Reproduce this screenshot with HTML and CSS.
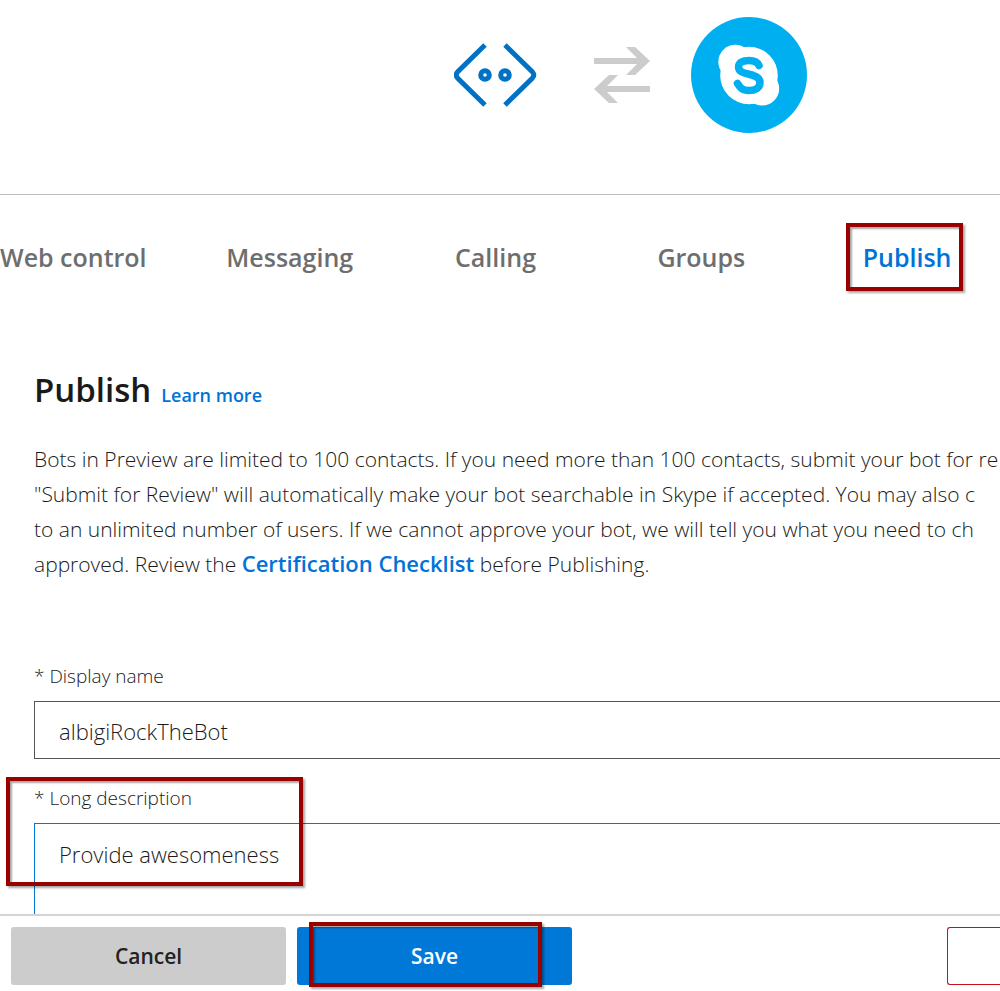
FILE: index.html
```html
<!DOCTYPE html>
<html lang="en">
<head>
<meta charset="utf-8">
<title>Publish</title>
<link rel="stylesheet" href="styles.css">
</head>
<body class="page">
<main class="content">
  <header class="banner">
    <svg class="bot-icon" viewBox="0 0 84 66" aria-hidden="true">
      <g fill="none" stroke="#0072c6" stroke-width="5">
        <path d="M31 3 3.500 30Q1 33 3.500 36L31 63"/>
        <path d="M51 3 78.500 30Q81 33 78.500 36L51 63"/>
        <circle cx="31" cy="33" r="4.300"/>
        <circle cx="51" cy="33" r="4.300"/>
      </g>
    </svg>
    <svg class="swap-icon" viewBox="0 0 56 56" aria-hidden="true">
      <g fill="#ccc">
        <path d="M0 11H43L32 0H41L56 14 41 28H32L43 17H0Z"/>
        <path d="M56 39H13L24 28H15L0 42 15 56H24L13 45H56Z"/>
      </g>
    </svg>
    <svg class="skype-icon" viewBox="0 0 116 116" aria-hidden="true">
      <circle cx="58" cy="58" r="58" fill="#00aff0"/>
      <g fill="#fff">
        <circle cx="58" cy="58.500" r="28.800"/>
        <circle cx="44.300" cy="44.800" r="17"/>
        <circle cx="71.200" cy="71.600" r="17"/>
      </g>
      <path d="M68 48.500C66.500 45 63 43.500 58 43.500 52 43.500 47.500 45.500 47.500 50 47.500 54.500 52 56 58 57.200 64 58.500 69 60.500 69 65.500 69 71 64 73.500 58 73.500 51 73.500 49 70.500 46.500 66.500" fill="none" stroke="#00aff0" stroke-width="7.500" stroke-linecap="round"/>
    </svg>
  </header>
  <nav class="tabs">
    <a class="tab tab-first" href="#web">Web control</a>
    <a class="tab" href="#messaging">Messaging</a>
    <a class="tab" href="#calling">Calling</a>
    <a class="tab" href="#groups">Groups</a>
    <a class="tab tab-active" href="#publish">Publish<span class="marker marker-tab"></span></a>
  </nav>
  <section class="publish" id="publish">
    <div class="heading">
      <h1 class="title">Publish</h1>
      <a class="learn" href="#learn">Learn more</a>
    </div>
    <p class="intro">Bots in Preview are limited to 100 contacts. If you need more than 100 contacts, submit your bot for re<br>
    "Submit for Review" will automatically make your bot searchable in Skype if accepted. You may also c<br>
    to an unlimited number of users. If we cannot approve your bot, we will tell you what you need to ch<br>
    approved. Review the <a class="link" href="#checklist">Certification Checklist</a> before Publishing.</p>
    <form class="form" id="bot-form">
      <div class="field">
        <label class="label" for="name">* Display name</label>
        <input class="input" id="name" type="text" value="albigiRockTheBot">
      </div>
      <div class="field">
        <label class="label" for="description">* Long description</label>
        <textarea class="input textarea" id="description">Provide awesomeness</textarea>
        <span class="marker marker-field"></span>
      </div>
    </form>
  </section>
</main>
<footer class="actions">
  <button class="button" type="button">Cancel</button>
  <button class="button button-primary" type="submit" form="bot-form">Save<span class="marker marker-save"></span></button>
  <button class="button button-danger" type="button" aria-label="Delete"></button>
</footer>
</body>
</html>
```
FILE: styles.css
```css
* { box-sizing: border-box; }

.page {
  display: flex;
  flex-direction: column;
  height: 100vh;
  margin: 0;
  overflow: hidden;
  background: #fff;
  color: #1a1a1a;
  font-family: "Open Sans", "Noto Sans", sans-serif;
  font-size: 21px;
}

.content {
  flex: 1;
  min-height: 0;
  overflow: hidden;
}

.banner {
  display: flex;
  align-items: center;
  justify-content: center;
  height: 195px;
  padding: 0 0 45px 260px;
  border-bottom: 1px solid #bbb;
}

.bot-icon { width: 84px; margin-right: 56px; }
.swap-icon { width: 56px; margin-right: 41px; }
.skype-icon { width: 116px; }

.tabs {
  display: grid;
  grid-template-columns: 187fr repeat(4, 206fr);
  margin-right: -10px;
  padding: 39px 0 41px;
}

.tab {
  position: relative;
  color: #6e6e6e;
  font-size: 25px;
  font-weight: 600;
  line-height: 46px;
  text-align: center;
  text-decoration: none;
}

.tab-first { text-align: left; }
.tab-active { color: #0072d8; }

.marker {
  position: absolute;
  border: 4px solid #900;
  box-shadow: 2px 2px 2px rgba(0, 0, 0, .35), inset 2px 2px 2px rgba(0, 0, 0, .35);
  pointer-events: none;
}

.marker-tab { inset: -11px 47px -11px 42px; }
.marker-field { left: -28px; top: -8px; width: 297px; height: 109px; }
.marker-save { inset: -5px 30px -2px 12px; }

.publish {
  padding: 45px 0 0 34px;
}

.heading {
  display: flex;
  align-items: baseline;
  gap: 10px;
}

.title {
  margin: 0;
  font-size: 33px;
  font-weight: 600;
  line-height: 48px;
}

.learn,
.link {
  color: #0072d8;
  font-weight: 600;
  text-decoration: none;
}

.learn { font-size: 18px; }
.link { font-size: 22px; line-height: 30px; }

.intro {
  margin: 28px 0 81px;
  font-weight: 300;
  line-height: 35px;
  white-space: nowrap;
}

.field {
  position: relative;
  margin-bottom: 26px;
}

.label {
  display: block;
  margin-bottom: 12px;
  font-size: 19px;
  font-weight: 300;
  line-height: 26px;
}

.input {
  display: block;
  width: 100%;
  height: 58px;
  padding: 2px 24px 0;
  border: 1px solid #555;
  border-right: 0;
  border-radius: 0;
  outline: none;
  background: #fff;
  color: #1a1a1a;
  font: 300 22px/30px "Open Sans", "Noto Sans", sans-serif;
}

.textarea {
  height: 140px;
  padding-top: 15px;
  border-color: #0078d7;
  resize: none;
}

.actions {
  display: flex;
  gap: 11px;
  height: 77px;
  padding: 11px 0 6px 11px;
  border-top: 2px solid #d4d4d4;
}

.button {
  position: relative;
  width: 275px;
  height: 58px;
  flex: none;
  padding: 0;
  border: 0;
  border-radius: 3px;
  background: #ccc;
  color: #222;
  font: 600 21px/30px "Open Sans", "Noto Sans", sans-serif;
}

.button-primary {
  background: #0078d7;
  color: #fff;
}

.button-danger {
  width: 53px;
  margin-left: auto;
  border: 1px solid #c50f1f;
  border-right: 0;
  border-radius: 3px 0 0 3px;
  background: #fff;
}
```
